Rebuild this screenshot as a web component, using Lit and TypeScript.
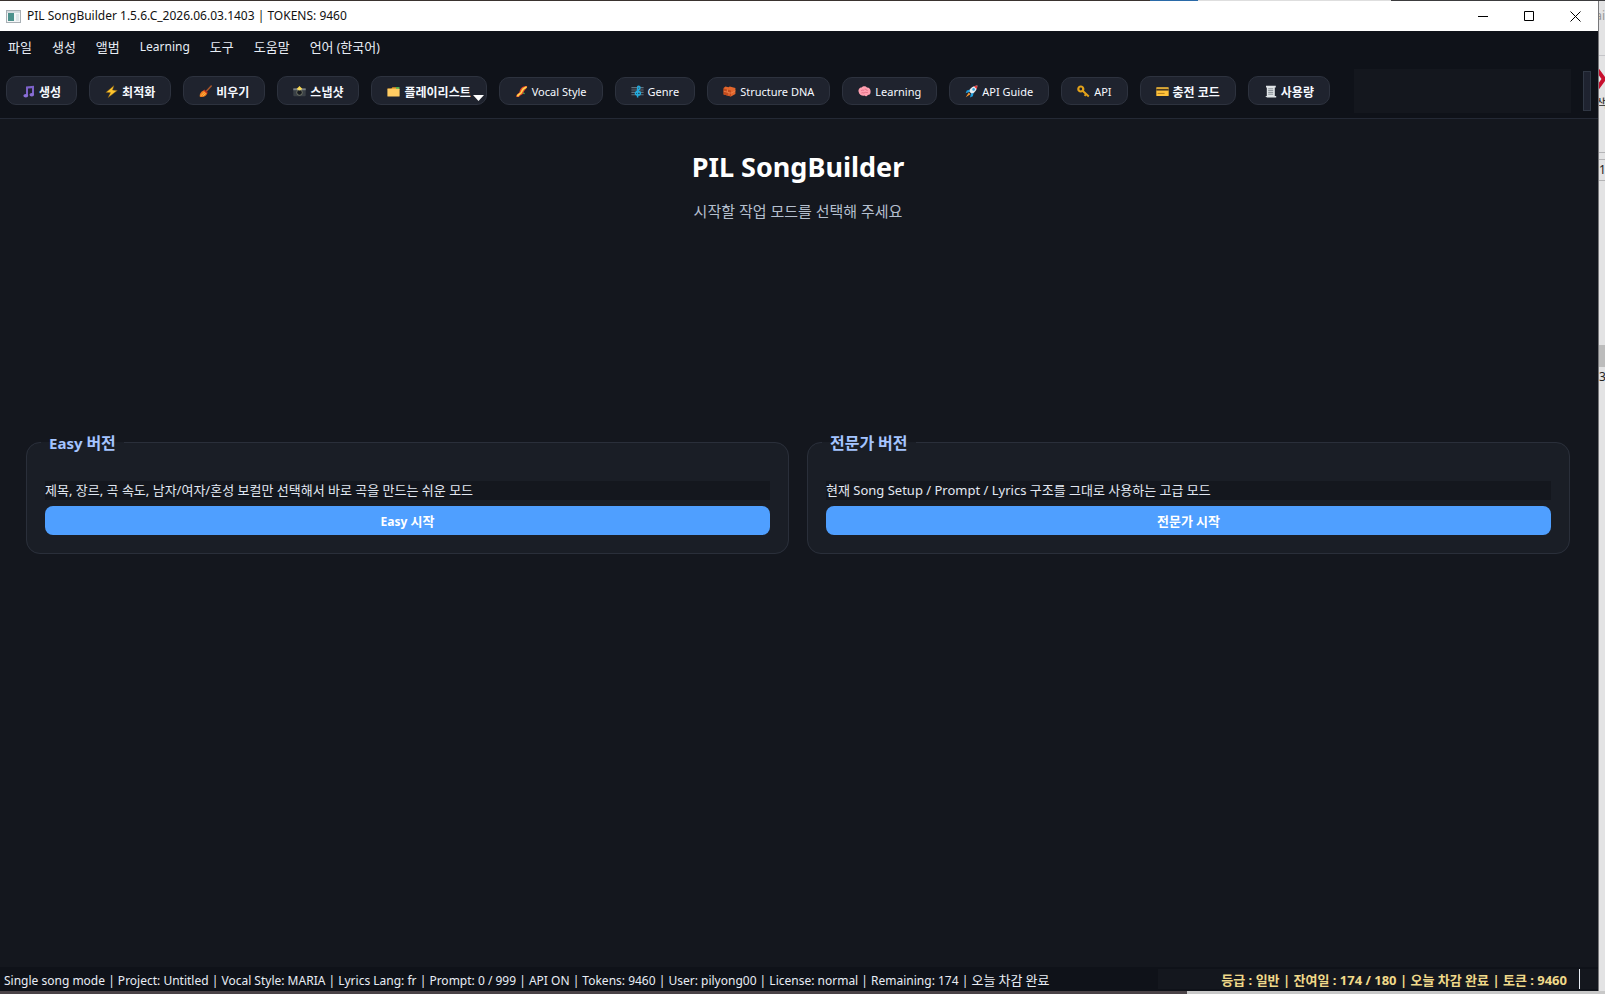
import { LitElement, html, css, svg, nothing } from "lit";
import { customElement, property } from "lit/decorators.js";
import { classMap } from "lit/directives/class-map.js";

const HANGUL = /([\u3131-\uD79D]+)/;

/* Hangul runs are set one step larger than the Latin text around them. */
const mixed = (text: string) =>
  text
    .split(HANGUL)
    .filter((part) => part !== "")
    .map((part) => (HANGUL.test(part) ? html`<span class="ko">${part}</span>` : part));

const icons: Record<string, unknown> = {
  note: svg`<path d="M4 1.5 12 .8v8.7H10V3.2L6 3.6v7H4z" fill="#7d62c9"/><ellipse cx="3.8" cy="10.8" rx="2.4" ry="1.8" fill="#8a6fd6"/><ellipse cx="9.8" cy="9.8" rx="2.3" ry="1.8" fill="#8a6fd6"/>`,
  bolt: svg`<path d="M9 .6.8 7.4l4.6.3-2.400 5L12.400 5.400l-4.800-.4z" fill="#ffc52e" stroke="#6b4a12" stroke-width=".5"/>`,
  broom: svg`<path d="M12.2 1 7.6 6" stroke="#a5542a" stroke-width="1.600" stroke-linecap="round"/><path d="M5 5.200 8.200 8.200C7.600 11 4.600 12.600.8 11.800.2 8.600 2.600 6 5 5.200z" fill="#f07a1d"/><path d="M2 10.800 5.600 7M4 11.200l2.600-3" stroke="#ffc24a" stroke-width=".9"/><path d="m5 5 3.400 3.200" stroke="#c62c1c" stroke-width="1.200"/>`,
  camera: svg`<rect x=".3" y="3.2" width="12.4" height="8" rx="1" fill="#3a4046"/><path d="M.3 3.400h12.400v1.800H.3z" fill="#7c8286"/><path d="M3.600 4 6.500.9 9.400 4z" fill="#ffd84a"/><circle cx="6.5" cy="7.5" r="2.8" fill="#171b20" stroke="#8b8f7a" stroke-width=".7"/><path d="m4 4.600 2.500-1.800L9 4.600l-2.500.9z" fill="#f2dc6b"/>`,
  folder: svg`<path d="M.4 3.4h4l1-1.2h6.8v2H.4z" fill="#e79b26"/><path d="M9 2h3.400v3H9z" fill="#4cae4f"/><rect x=".4" y="3.800" width="12.200" height="7.800" rx=".6" fill="#ffcb62"/>`,
  swirl: svg`<path d="M1.200 12C1.600 8 4 9.200 4.600 6.600 5.200 3 8 .8 12.200 1 11.600 4.400 9.600 4.600 8.800 7 7.800 10.400 5.400 9.400 4 12z" fill="#e8482c"/><path d="M2.400 11.400C3.400 8.600 6 9.400 6.800 6.400 7.400 4 9 3 11.600 2" stroke="#ffd84a" stroke-width="1.700" fill="none"/><path d="m8 8 1.600.6" stroke="#4cae4f" stroke-width="1.200"/>`,
  score: svg`<path d="M.4 2.600h12.200M.4 5h12.200M.4 7.400h12.200M.4 9.800h12.200" stroke="#62717c" stroke-width="1.100"/><path d="M6.600 12.400V2.400C6.600.6 9.400.8 9 3.200 8.600 5.400 4.400 5.800 4.400 8.200c0 2.600 5 2.400 5 0S6 6.200 6.200 8" stroke="#22a9dc" stroke-width="1.500" fill="none"/>`,
  brick: svg`<path d="M.6 3 2.400 1.400l3 .8 1.400-.8 5.600 1.600v6L8 11.600.6 9.400z" fill="#e2662c"/><path d="M.6 3.400 8 5.400v6.200L.6 9.400z" fill="#c24a1c"/><path d="M.8 6.200 8 8.200l4.400-2.400M4.400 4.400v2.800M6 8v2.600" stroke="#ee8650" stroke-width=".8" fill="none"/>`,
  brain: svg`<path d="M.6 6.800C0 4.400 1.600 2.400 3.600 2.400c1.200-1.600 4.200-1.600 5.400 0 2.400 0 3.800 1.800 3.600 4 .2 2.200-1 3.600-2.800 3.600-.8 1.600-2.600 1.600-3.200.6C4.400 11.400 1 9.800.6 6.800z" fill="#ff9fb0"/><path d="M3.2 5.600c1.200-1.200 2.200.2 3.200-.8M7.200 3.600c.2 1.600 2 1 2.400 2.200M3.400 8c1.400-.8 2.200.6 3.400-.4 1-.8 1.800.4 3-.2" stroke="#d9627c" stroke-width=".8" fill="none"/>`,
  rocket: svg`<path d="M12.400.6C8.600.6 5.600 2.800 3.800 6L7 9.200C10.200 7.400 12.400 4.400 12.400.6z" fill="#e6edf2"/><path d="M12.400.6 8.800 1.200l3 3z" fill="#e23a3a"/><path d="M5 4.400 1.800 5.400.6 8.200l3.600-1.200zM8.600 8l-.8 3.200L5 12.400l1-3.800z" fill="#1f9fe0"/><circle cx="8.600" cy="4.400" r="1.300" fill="#35a6e0"/><path d="M3.800 7.600.8 12.200l4.600-3z" fill="#ff9a2e"/>`,
  key: svg`<circle cx="3.800" cy="4" r="2.500" fill="none" stroke="#e3a21a" stroke-width="2.200"/><path d="m5.600 5.800 6.200 5.600M9 9.200l-1.400 1.600" stroke="#e3a21a" stroke-width="2"/>`,
  card: svg`<rect x=".3" y="2.200" width="12.400" height="8.800" rx=".6" fill="#ffc23a"/><path d="M.3 3.800h12.400v1.800H.3z" fill="#4a3a20"/><path d="M1.600 8.400h7" stroke="#b07c1c" stroke-width="1"/>`,
  receipt: svg`<path d="M2 .8h9.800v1.600h-1V11h1.400v1.400H3L1.200 11h1.600V2.400H2z" fill="#dfe3e6"/><path d="M4.200 3.800h5M4.200 5.600h5M4.200 7.400h5M4.200 9.200h5" stroke="#727a82" stroke-width=".8"/>`,
};

interface Tool {
  icon: string;
  label: string;
  menu?: boolean;
}

const tools: Tool[] = [
  { icon: "note", label: "생성" },
  { icon: "bolt", label: "최적화" },
  { icon: "broom", label: "비우기" },
  { icon: "camera", label: "스냅샷" },
  { icon: "folder", label: "플레이리스트", menu: true },
  { icon: "swirl", label: "Vocal Style" },
  { icon: "score", label: "Genre" },
  { icon: "brick", label: "Structure DNA" },
  { icon: "brain", label: "Learning" },
  { icon: "rocket", label: "API Guide" },
  { icon: "key", label: "API" },
  { icon: "card", label: "충전 코드" },
  { icon: "receipt", label: "사용량" },
];

const menus = ["파일", "생성", "앨범", "Learning", "도구", "도움말", "언어 (한국어)"];

@customElement("tool-button")
class ToolButton extends LitElement {
  @property() icon = "";
  @property() label = "";
  @property({ type: Boolean }) menu = false;

  static styles = css`
    :host {
      display: block;
      flex: none;
    }
    .tool {
      position: relative;
      display: flex;
      align-items: center;
      gap: 4px;
      height: 28px;
      box-sizing: border-box;
      padding: 0 15px;
      border: 1px solid #2d323e;
      border-radius: 10px;
      background: #1f232e;
      color: #f6f9ff;
      font: 400 11px "Noto Sans", "Noto Sans CJK KR", sans-serif;
      white-space: nowrap;
    }
    .tall {
      height: 29px;
      padding-top: 2px;
      font-size: 12px;
      font-weight: 700;
    }
    .icon {
      width: 13px;
      height: 13px;
      flex: none;
    }
    .arrow {
      position: absolute;
      right: 2px;
      bottom: 3px;
      width: 11px;
      height: 6px;
    }
  `;

  render() {
    return html`<button class=${classMap({ tool: true, tall: HANGUL.test(this.label) })} type="button">
      <svg class="icon" viewBox="0 0 13 13" aria-hidden="true">${icons[this.icon]}</svg>
      <span>${this.label}</span>
      ${this.menu
        ? html`<svg class="arrow" viewBox="0 0 11 6" aria-hidden="true"><path d="M0 0h11L5.500 6z" fill="#fff" /></svg>`
        : nothing}
    </button>`;
  }
}

@customElement("mode-card")
class ModeCard extends LitElement {
  @property() heading = "";
  @property() description = "";
  @property() action = "";

  static styles = css`
    :host {
      display: block;
      flex: 1;
      min-width: 0;
      font-size: 12px;
    }
    .card {
      margin: 0;
      min-width: 0;
      padding: 0 14px 18px;
      border: 1px solid #2a2f3a;
      border-radius: 14px;
      background: #1a1e26;
    }
    .heading {
      padding: 0 8px;
      font-size: 15px;
      line-height: 20px;
      font-weight: 700;
      color: #a4c4ff;
    }
    .heading .ko {
      font-size: 16px;
    }
    .ko {
      font-size: 13px;
    }
    .body {
      display: flex;
      flex-direction: column;
      gap: 6px;
      padding: 28px 4px 0;
    }
    .description {
      margin: 0;
      background: #14171e;
      color: #e2e8f2;
      font-size: 13px;
      line-height: 19px;
    }
    .action {
      height: 29px;
      padding: 0;
      border: 0;
      border-radius: 8px;
      background: #4f9fff;
      color: #fff;
      font: inherit;
      font-weight: 700;
    }
  `;

  render() {
    return html`<fieldset class="card">
      <legend class="heading">${mixed(this.heading)}</legend>
      <div class="body">
        <p class="description">${this.description}</p>
        <button class="action" type="button">${mixed(this.action)}</button>
      </div>
    </fieldset>`;
  }
}

@customElement("app-root")
class AppRoot extends LitElement {
  static styles = css`
    :host {
      display: grid;
      grid-template-columns: minmax(0, 1fr) 7px;
      grid-template-rows: 1px minmax(0, 1fr) 3px;
      height: 100vh;
      overflow: hidden;
      background: #47444a;
      font-family: "Noto Sans", "Noto Sans CJK KR", sans-serif;
      font-size: 12px;
      color: #e8edf5;
    }
    .ko {
      font-size: 13px;
    }
    .above {
      grid-column: 1 / -1;
      background: linear-gradient(90deg, #3a332f 0 1150px, #2a6aa8 1150px 1198px, #dedede 1198px 1391px, #3c3c3e 1391px);
    }
    .below {
      grid-column: 1 / -1;
      background: linear-gradient(90deg, #4a4347 0 1187px, #c8c8c8 1187px);
    }
    .window {
      display: flex;
      flex-direction: column;
      min-width: 0;
      background: #14171e;
    }
    .titlebar {
      display: flex;
      align-items: center;
      height: 30px;
      padding-left: 6px;
      gap: 6px;
      background: #fff;
      color: #111;
    }
    .app-icon {
      width: 15px;
      height: 13px;
    }
    .title {
      flex: 1;
      padding-bottom: 2px;
    }
    .controls {
      display: flex;
    }
    .control {
      display: grid;
      place-items: center;
      width: 46px;
      height: 28px;
      padding: 0;
      border: 0;
      background: none;
    }
    .control svg {
      width: 11px;
      height: 11px;
      fill: none;
      stroke: #000;
    }
    .menubar {
      display: flex;
      align-items: center;
      gap: 20px;
      height: 32px;
      padding: 0 8px;
      background: #0f1219;
    }
    .menu {
      padding: 0;
      border: 0;
      background: none;
      color: inherit;
      font: inherit;
      line-height: 20px;
    }
    .toolbar {
      display: flex;
      align-items: center;
      gap: 12px;
      height: 55px;
      padding: 0 7px 0 6px;
      border-bottom: 1px solid #242935;
      background: #0f1219;
    }
    .tools {
      display: flex;
      align-items: flex-end;
      gap: 12px;
    }
    .panel {
      flex: 1;
      height: 44px;
      margin-left: 12px;
      background: #14171e;
    }
    .handle {
      box-sizing: border-box;
      width: 8px;
      height: 40px;
      border: 1px solid #303744;
      background: #1f2330;
    }
    .start {
      display: flex;
      flex: 1;
      flex-direction: column;
      padding: 28px 28px 0 26px;
      text-align: center;
    }
    .name {
      margin: 0;
      font-size: 27px;
      line-height: 40px;
      color: #fff;
    }
    .prompt {
      margin: 13px 0 0;
      font-size: 15px;
      line-height: 22px;
      color: #b4bfce;
    }
    .before {
      flex: 1 1 4px;
    }
    .after {
      flex: 2 1 0;
    }
    .modes {
      display: flex;
      gap: 18px;
      text-align: left;
    }
    .statusbar {
      display: flex;
      align-items: center;
      height: 24px;
      padding-left: 4px;
      background: #0f1219;
      white-space: nowrap;
    }
    .status {
      flex: 1;
    }
    .license {
      display: flex;
      align-items: center;
      justify-content: flex-end;
      gap: 12px;
      width: 422px;
      height: 20px;
      padding-right: 18px;
      background: #14171e;
      color: #f0d98a;
      font-size: 13px;
      font-weight: 700;
    }
    .caret {
      width: 1px;
      height: 20px;
      background: #e8edf5;
    }
    .neighbour {
      display: flex;
      flex-direction: column;
      overflow: hidden;
      border-left: 1px solid #77777a;
      background: #e3e3e4;
      color: #222;
      font-size: 12px;
      line-height: 16px;
    }
    .neighbour span {
      flex: none;
      box-sizing: border-box;
    }
    .tab {
      display: flex;
      justify-content: flex-end;
      height: 55px;
      padding-top: 7px;
      border-bottom: 1px solid #c4c4c8;
      color: #999;
    }
    .mark {
      height: 40px;
      padding-top: 11px;
    }
    .mark svg {
      display: block;
      width: 6px;
      height: 24px;
    }
    .word {
      display: flex;
      justify-content: center;
      height: 57px;
      border-bottom: 1px solid #b4b4b6;
    }
    .row {
      height: 22px;
      margin: 6px 0 164px;
      padding-top: 2px;
      border: solid #b4b4b6;
      border-width: 1px 0;
    }
    .band {
      height: 22px;
      margin-bottom: 2px;
      background: #bcbcbc;
    }
  `;

  render() {
    return html`
      <div class="above"></div>
      <div class="window">
        <header class="titlebar">
          <svg class="app-icon" viewBox="0 0 15 13" aria-hidden="true">
            <rect x=".5" y=".5" width="14" height="12" fill="#f4f6f7" stroke="#a9b0b5" />
            <path d="M1 1h13v2H1z" fill="#d5dbdf" />
            <path d="M2 3h6v8H2z" fill="#4d918c" />
            <path d="M10 4h3v7h-3z" fill="#dfe5e8" />
          </svg>
          <span class="title">PIL SongBuilder 1.5.6.C_2026.06.03.1403 | TOKENS: 9460</span>
          <div class="controls">
            <button class="control" type="button" aria-label="Minimize">
              <svg viewBox="0 0 11 11"><path d="M0 5.500h10" /></svg>
            </button>
            <button class="control" type="button" aria-label="Maximize">
              <svg viewBox="0 0 11 11"><path d="M.5.5h9v9h-9z" /></svg>
            </button>
            <button class="control" type="button" aria-label="Close">
              <svg viewBox="0 0 11 11"><path d="m.5.5 10 10m0-10-10 10" /></svg>
            </button>
          </div>
        </header>
        <nav class="menubar">
          ${menus.map((name) => html`<button class="menu" type="button">${mixed(name)}</button>`)}
        </nav>
        <div class="toolbar">
          <div class="tools">
            ${tools.map(
              (tool) =>
                html`<tool-button .icon=${tool.icon} .label=${tool.label} .menu=${tool.menu ?? false}></tool-button>`
            )}
          </div>
          <div class="panel"></div>
          <div class="handle"></div>
        </div>
        <main class="start">
          <h1 class="name">PIL SongBuilder</h1>
          <p class="prompt">시작할 작업 모드를 선택해 주세요</p>
          <div class="before"></div>
          <div class="modes">
            <mode-card
              heading="Easy 버전"
              description="제목, 장르, 곡 속도, 남자/여자/혼성 보컬만 선택해서 바로 곡을 만드는 쉬운 모드"
              action="Easy 시작"
            ></mode-card>
            <mode-card
              heading="전문가 버전"
              description="현재 Song Setup / Prompt / Lyrics 구조를 그대로 사용하는 고급 모드"
              action="전문가 시작"
            ></mode-card>
          </div>
          <div class="after"></div>
        </main>
        <footer class="statusbar">
          <span class="status"
            >${mixed(
              "Single song mode | Project: Untitled | Vocal Style: MARIA | Lyrics Lang: fr | Prompt: 0 / 999 | API ON | Tokens: 9460 | User: pilyong00 | License: normal | Remaining: 174 | 오늘 차감 완료"
            )}</span
          >
          <div class="license">
            <span>등급 : 일반 | 잔여일 : 174 / 180 | 오늘 차감 완료 | 토큰 : 9460</span>
            <span class="caret"></span>
          </div>
        </footer>
      </div>
      <aside class="neighbour">
        <span class="tab">ai</span>
        <span class="mark">
          <svg viewBox="0 0 6 24" aria-hidden="true"><path d="m-3 1 8 11-8 11" fill="none" stroke="#c8102e" stroke-width="4" /></svg>
        </span>
        <span class="word">색</span>
        <span class="row">1</span>
        <span class="band"></span>
        <span>3</span>
      </aside>
      <div class="below"></div>
    `;
  }
}
